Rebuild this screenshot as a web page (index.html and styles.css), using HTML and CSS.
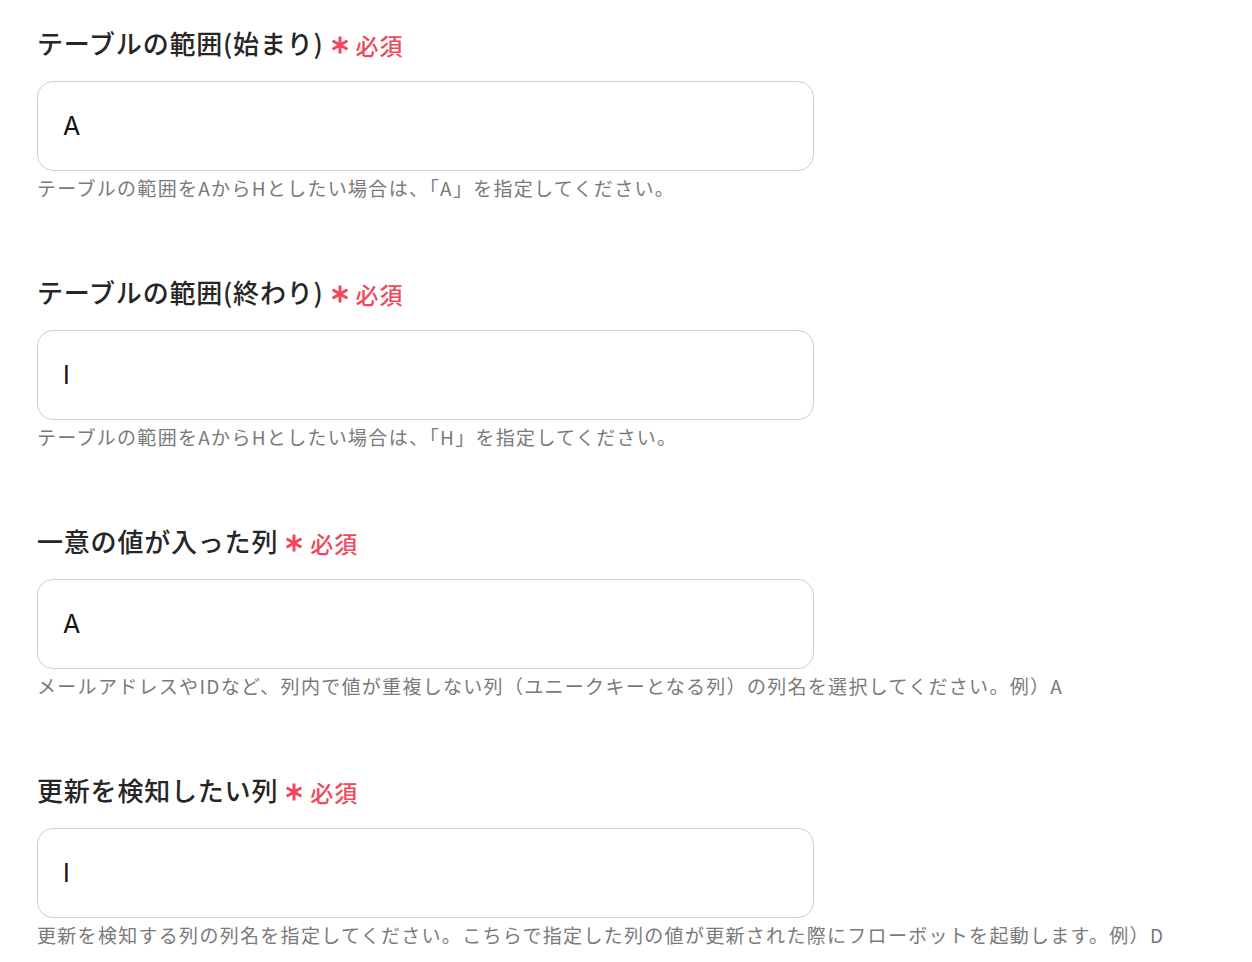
FILE: index.html
```html
<!DOCTYPE html>
<html lang="ja">
<head>
<meta charset="utf-8">
<link rel="stylesheet" href="styles.css">
</head>
<body>
<div class="form">
  <div class="field">
    <div class="label">テーブルの範囲(始まり)<span class="req"><svg class="ast" viewBox="0 0 18 18"><path d="M9 0.5v17M1.6 4.75l14.8 8.5M16.4 4.75l-14.8 8.5"/></svg>必須</span></div>
    <div class="input">A</div>
    <div class="help">テーブルの範囲をAからHとしたい場合は、「A」を指定してください。</div>
  </div>
  <div class="field">
    <div class="label">テーブルの範囲(終わり)<span class="req"><svg class="ast" viewBox="0 0 18 18"><path d="M9 0.5v17M1.6 4.75l14.8 8.5M16.4 4.75l-14.8 8.5"/></svg>必須</span></div>
    <div class="input">I</div>
    <div class="help">テーブルの範囲をAからHとしたい場合は、「H」を指定してください。</div>
  </div>
  <div class="field">
    <div class="label">一意の値が入った列<span class="req"><svg class="ast" viewBox="0 0 18 18"><path d="M9 0.5v17M1.6 4.75l14.8 8.5M16.4 4.75l-14.8 8.5"/></svg>必須</span></div>
    <div class="input">A</div>
    <div class="help">メールアドレスやIDなど、列内で値が重複しない列（ユニークキーとなる列）の列名を選択してください。例）A</div>
  </div>
  <div class="field">
    <div class="label">更新を検知したい列<span class="req"><svg class="ast" viewBox="0 0 18 18"><path d="M9 0.5v17M1.6 4.75l14.8 8.5M16.4 4.75l-14.8 8.5"/></svg>必須</span></div>
    <div class="input">I</div>
    <div class="help">更新を検知する列の列名を指定してください。こちらで指定した列の値が更新された際にフローボットを起動します。例）D</div>
  </div>
</div>
</body>
</html>
```

FILE: styles.css
```css
html, body {
  margin: 0;
  padding: 0;
  background: #fff;
}
body {
  font-family: "Noto Sans CJK JP", "Noto Sans", sans-serif;
}
.form {
  padding: 24px 0 0 37px;
  display: flex;
  flex-direction: column;
  gap: 71px;
}
.field {
  display: flex;
  flex-direction: column;
}
.label {
  height: 38px;
  line-height: 38px;
  font-size: 26px;
  font-weight: 500;
  color: #262626;
  letter-spacing: 0.8px;
  display: flex;
  align-items: center;
  white-space: nowrap;
}
.req {
  display: inline-flex;
  align-items: center;
  margin-left: 7px;
  color: #f2465c;
  font-size: 23px;
  font-weight: 500;
  letter-spacing: 1px;
  padding-top: 3px;
}
.ast {
  width: 18px;
  height: 18px;
  margin-right: 7px;
  stroke: #f2465c;
  stroke-width: 3;
  fill: none;
}
.input {
  margin-top: 19px;
  width: 777px;
  height: 90px;
  box-sizing: border-box;
  border: 1px solid #cfcfcf;
  border-radius: 16px;
  padding-left: 25px;
  display: flex;
  align-items: center;
  font-family: "Inter", "Noto Sans", sans-serif;
  font-size: 25px;
  color: #111;
}
.help {
  margin-top: 3px;
  height: 28px;
  line-height: 28px;
  font-size: 19px;
  letter-spacing: 1.3px;
  color: #7a7a7a;
  white-space: nowrap;
}
```
